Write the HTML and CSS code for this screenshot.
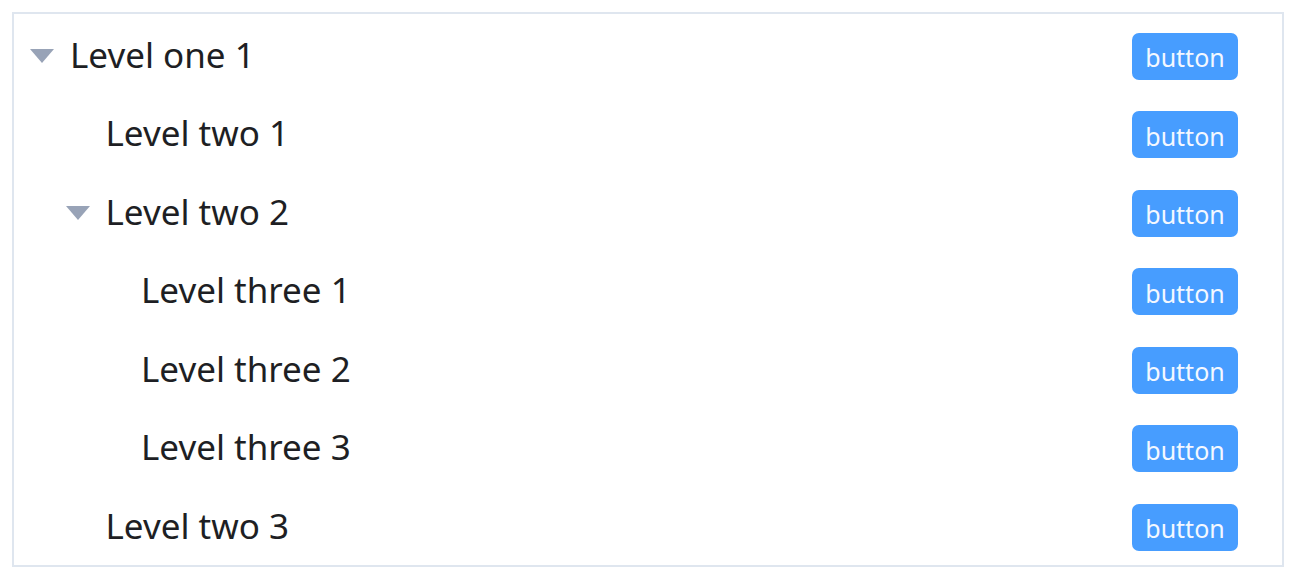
FILE: index.html
```html
<!DOCTYPE html>
<html lang="en">
<head>
    <meta charset="UTF-8">
    <title>Tree</title>
    <link rel="stylesheet" href="styles.css">
</head>
<body>
    <div class="tree">
        <div class="node">
            <div class="node-row">
                <span class="caret open"></span>
                <span class="label">Level one 1</span>
                <button class="btn">button</button>
            </div>
            <div class="children">
                <div class="node">
                    <div class="node-row">
                        <span class="caret leaf"></span>
                        <span class="label">Level two 1</span>
                        <button class="btn">button</button>
                    </div>
                </div>
                <div class="node">
                    <div class="node-row">
                        <span class="caret open"></span>
                        <span class="label">Level two 2</span>
                        <button class="btn">button</button>
                    </div>
                    <div class="children">
                        <div class="node">
                            <div class="node-row">
                                <span class="caret leaf"></span>
                                <span class="label">Level three 1</span>
                                <button class="btn">button</button>
                            </div>
                        </div>
                        <div class="node">
                            <div class="node-row">
                                <span class="caret leaf"></span>
                                <span class="label">Level three 2</span>
                                <button class="btn">button</button>
                            </div>
                        </div>
                        <div class="node">
                            <div class="node-row">
                                <span class="caret leaf"></span>
                                <span class="label">Level three 3</span>
                                <button class="btn">button</button>
                            </div>
                        </div>
                    </div>
                </div>
                <div class="node">
                    <div class="node-row">
                        <span class="caret leaf"></span>
                        <span class="label">Level two 3</span>
                        <button class="btn">button</button>
                    </div>
                </div>
            </div>
        </div>
    </div>
</body>
</html>
```

FILE: styles.css
```css
html, body {
    margin: 0;
    padding: 0;
    background: #fff;
}
body {
    padding: 12px 15px 0 12px;
    font-family: 'Noto Sans', 'Liberation Sans', Arial, sans-serif;
}
.tree {
    border: 2px solid #dfe6ef;
    padding-top: 1px;
    width: 1268px;
}
.node-row {
    display: flex;
    align-items: center;
    height: 78.5px;
    padding-left: 16px;
    padding-right: 44px;
}
.children {
    padding-left: 35.5px;
}
.caret {
    width: 40px;
    flex: none;
    display: flex;
    align-items: center;
    height: 20px;
}
.caret.open::before {
    content: "";
    display: block;
    width: 0;
    height: 0;
    margin-top: 4px;
    border-left: 12px solid transparent;
    border-right: 12px solid transparent;
    border-top: 14px solid #98a3b7;
}
.label {
    flex: 1;
    font-size: 35px;
    color: #1e1f24;
    line-height: 1;
}
.btn {
    width: 106px;
    height: 47px;
    margin-top: 4px;
    padding: 2px 0 0;
    border: none;
    border-radius: 7px;
    background: #479dff;
    color: #f4f8ff;
    font-family: 'Noto Sans', 'Liberation Sans', Arial, sans-serif;
    font-size: 25px;
    cursor: pointer;
}
```
